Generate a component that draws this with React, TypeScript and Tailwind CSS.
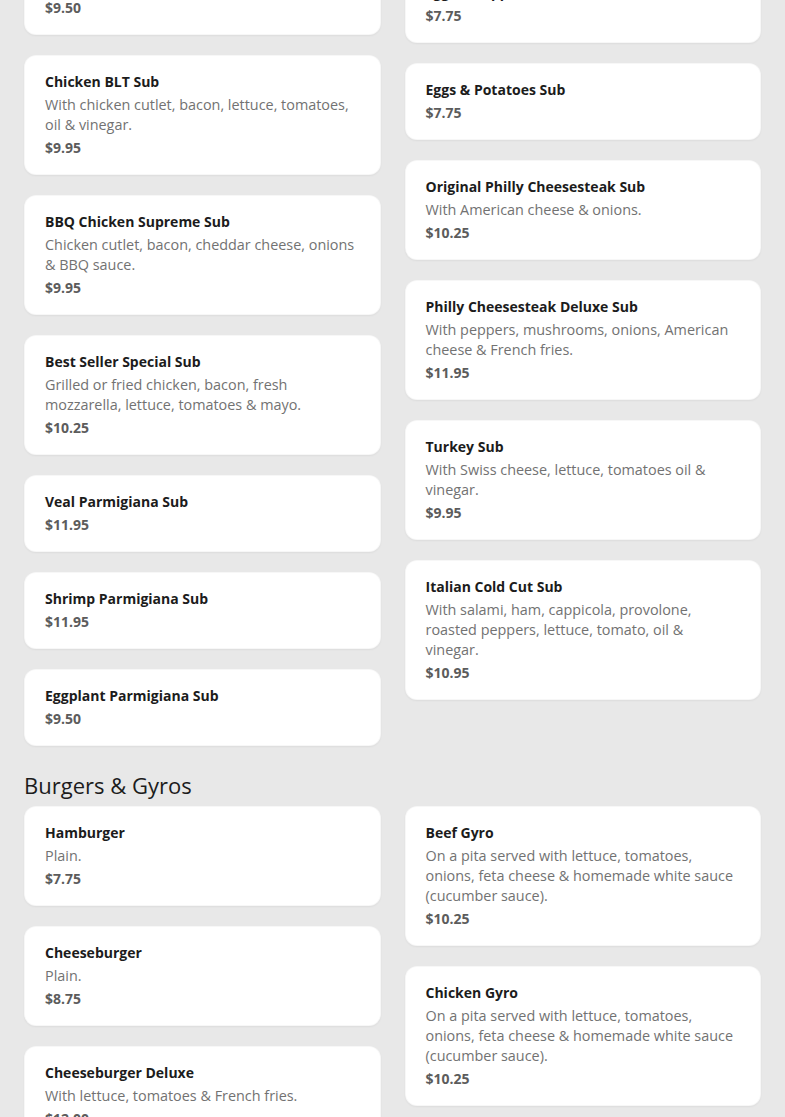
type Item = { name: string; desc?: string; price: string };

const subsLeft: Item[] = [
  { name: "Chicken Parmigiana Sub", price: "$9.50" },
  {
    name: "Chicken BLT Sub",
    desc: "With chicken cutlet, bacon, lettuce, tomatoes, oil & vinegar.",
    price: "$9.95",
  },
  {
    name: "BBQ Chicken Supreme Sub",
    desc: "Chicken cutlet, bacon, cheddar cheese, onions & BBQ sauce.",
    price: "$9.95",
  },
  {
    name: "Best Seller Special Sub",
    desc: "Grilled or fried chicken, bacon, fresh mozzarella, lettuce, tomatoes & mayo.",
    price: "$10.25",
  },
  { name: "Veal Parmigiana Sub", price: "$11.95" },
  { name: "Shrimp Parmigiana Sub", price: "$11.95" },
  { name: "Eggplant Parmigiana Sub", price: "$9.50" },
];

const subsRight: Item[] = [
  { name: "Eggs & Peppers Sub", price: "$7.75" },
  { name: "Eggs & Potatoes Sub", price: "$7.75" },
  {
    name: "Original Philly Cheesesteak Sub",
    desc: "With American cheese & onions.",
    price: "$10.25",
  },
  {
    name: "Philly Cheesesteak Deluxe Sub",
    desc: "With peppers, mushrooms, onions, American cheese & French fries.",
    price: "$11.95",
  },
  {
    name: "Turkey Sub",
    desc: "With Swiss cheese, lettuce, tomatoes oil & vinegar.",
    price: "$9.95",
  },
  {
    name: "Italian Cold Cut Sub",
    desc: "With salami, ham, cappicola, provolone, roasted peppers, lettuce, tomato, oil & vinegar.",
    price: "$10.95",
  },
];

const gyroDesc =
  "On a pita served with lettuce, tomatoes, onions, feta cheese & homemade white sauce (cucumber sauce).";

const burgersLeft: Item[] = [
  { name: "Hamburger", desc: "Plain.", price: "$7.75" },
  { name: "Cheeseburger", desc: "Plain.", price: "$8.75" },
  {
    name: "Cheeseburger Deluxe",
    desc: "With lettuce, tomatoes & French fries.",
    price: "$12.00",
  },
];

const burgersRight: Item[] = [
  { name: "Beef Gyro", desc: gyroDesc, price: "$10.25" },
  { name: "Chicken Gyro", desc: gyroDesc, price: "$10.25" },
];

function MenuCard({ item }: { item: Item }) {
  return (
    <div className="rounded-xl bg-white border border-black/[0.03] shadow-[0_1px_2px_rgba(0,0,0,0.05)] px-5 pt-[15px] pb-4">
      <h3 className="text-[14px] leading-[21px] font-bold text-[#1c1c1c]">{item.name}</h3>
      {item.desc && (
        <p className="mt-[3px] text-[14.4px] leading-[20px] text-[#727272]">{item.desc}</p>
      )}
      <p className="mt-[3px] text-[14px] leading-[20px] font-bold text-[#5c5c5c]">{item.price}</p>
    </div>
  );
}

function Column({ items, className = "" }: { items: Item[]; className?: string }) {
  return (
    <div className={`flex flex-col gap-5 ${className}`}>
      {items.map((it) => (
        <MenuCard key={it.name} item={it} />
      ))}
    </div>
  );
}

export default function App() {
  return (
    <div
      className="h-[1117px] overflow-hidden bg-[#e8e8e8] px-6"
      style={{ fontFamily: '"Open Sans", "Noto Sans", sans-serif' }}
    >
      {/* ── Subs (scrolled partway) ── */}
      <div className="-mt-[42px] grid grid-cols-2 gap-6 items-start">
        <Column items={subsLeft} />
        <Column items={subsRight} className="mt-2" />
      </div>

      {/* ── Burgers & Gyros ── */}
      <h2 className="mt-[24px] mb-[6px] text-[22px] leading-[30px] text-[#1c1c1c]">Burgers &amp; Gyros</h2>
      <div className="grid grid-cols-2 gap-6 items-start">
        <Column items={burgersLeft} />
        <Column items={burgersRight} />
      </div>
    </div>
  );
}
